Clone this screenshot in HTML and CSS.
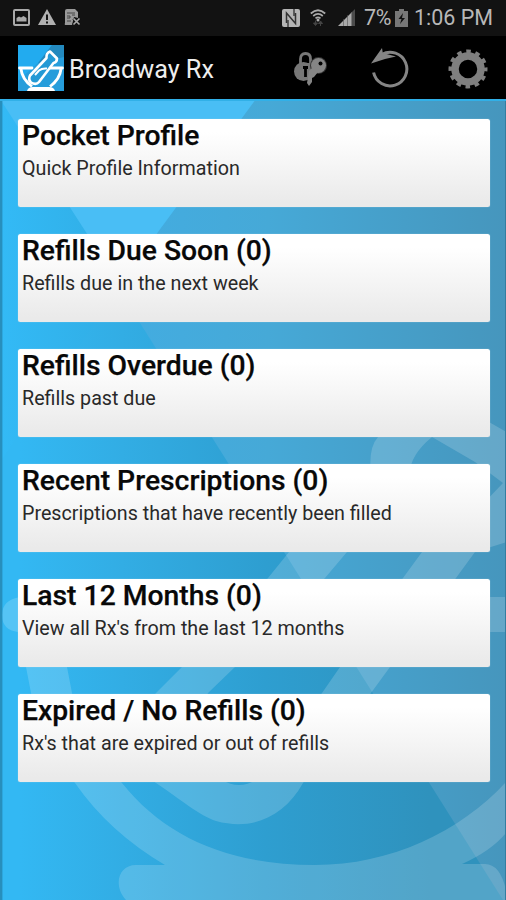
FILE: index.html
```html
<!DOCTYPE html>
<html lang="en">
<head>
<meta charset="utf-8">
<title>Broadway Rx</title>
<link rel="stylesheet" href="styles.css">
</head>
<body>
<div class="phone">
  <header class="status">
    <div class="status-left">
      <svg width="17" height="17" viewBox="0 0 17 17"><rect x="1" y="1" width="15" height="15" rx="1" fill="none" stroke="#aaa" stroke-width="2"/><path d="M3.500 12.500V9l2.500-1.500 2 1 2.500-1.500 3 2v3.500z" fill="#aaa"/></svg>
      <svg width="18" height="17" viewBox="0 0 18 17"><path d="M9 0l9 16H0z" fill="#b0b0b0"/><path d="M9 5.500v5.500M9 12.500v2" stroke="#111" stroke-width="2"/></svg>
      <svg width="17" height="17" viewBox="0 0 17 17"><path d="M1 2q0-2 2-2h8l3 3v6l-4-1-2 8H2q-2 0-1-2z" fill="#999"/><path d="M3 4h8M3 7h3v2H3M8 6h3M3 12h4" stroke="#444" fill="none"/><path d="M9.500 9.500l6 6M15.500 9.500l-6 6" stroke="#111" stroke-width="3"/><path d="M9.500 9.500l6 6M15.500 9.500l-6 6" stroke="#aaa" stroke-width="1.600"/></svg>
    </div>
    <div class="status-right">
      <svg class="nfc" width="18" height="18" viewBox="0 0 18 18"><rect width="18" height="18" rx="2" fill="#b5b5b5"/><path d="M4.500 14V4l9 10.500V4" stroke="#333" stroke-width="1.500" fill="none"/><path d="M6 18v-7M12 0v7" stroke="#222" stroke-width="1.200"/></svg>
      <svg class="wifi" width="16" height="18" viewBox="0 0 16 18"><path d="M.8 4.500Q8-2 15.200 4.500M3.200 7Q8 2.800 12.800 7M5.500 9.400Q8 7.300 10.500 9.400" stroke="#aaa" stroke-width="1.700" fill="none"/><circle cx="8" cy="11" r="1.500" fill="#aaa"/><path d="M5.500 11.500v4M3.500 14l2 2.500 2-2.500zM10.500 17v-4M8.500 14.500l2-2.500 2 2.500z" stroke="#444" fill="#444"/></svg>
      <svg class="signal" width="18" height="17" viewBox="0 0 18 17"><path d="M0 17L14 3v14z" fill="#aaa"/><path d="M14 3l3-3v17h-3z" fill="#4b4b4b"/><path d="M5.500 10v7M9.500 6v11M13.500 3v14" stroke="#555" stroke-width=".6"/></svg>
      <span class="percent">7%</span>
      <svg class="battery" width="13" height="18" viewBox="0 0 13 18"><path d="M4 0h5v2h4v16H0V2h4z" fill="#777"/><path d="M8 4L3.500 10h3L5 15l5-6H7z" fill="#111"/></svg>
      <span class="time">1:06 PM</span>
    </div>
  </header>
  <nav class="bar">
    <svg class="logo" width="46" height="46" viewBox="0 0 46 46"><rect width="46" height="46" fill="#269ddb"/><path d="M0 0h34L20 18 0 36z" fill="#22abef"/><path d="M20 18L34 0h12v12z" fill="#2389be"/><path d="M1.500 23H14M30 23h14.500" stroke="#fff" stroke-width="2.800" stroke-linecap="round"/><path d="M3 24q1 10 11 17.500M43 24q-1 10-11 17.500" stroke="#fff" stroke-width="2.800" fill="none"/><path d="M9 46q1-4 6-4h16q5 0 6 4z" fill="#fff"/><path d="M32 6.500L39 13.500Q39 17 35.500 18L21 37q-3 3.500-8 .5-3-3-1-7L28.500 13q-.5-5 3.500-6.500z" fill="#249ad5" stroke="#fff" stroke-width="2.600" stroke-linejoin="round"/><path d="M17 30l4-4.500q3-2.500 8-2" stroke="#fff" stroke-width="2" fill="none"/></svg>
    <h1 class="app">Broadway Rx</h1>
    <svg class="keys" width="33" height="36" viewBox="0 0 33 36"><path d="M6.500 14V8q0-5.500 5-5.500t5 5.500v6" fill="none" stroke="#777" stroke-width="2.800"/><circle cx="9.500" cy="20.500" r="9.500" fill="#777"/><path d="M5 12h13v15h-8z" fill="#777"/><path d="M11.500 16v10M9 16.500h5" stroke="#000" stroke-width="2.800"/><circle cx="24.500" cy="14.500" r="8.500" fill="#333"/><circle cx="24.500" cy="14.500" r="7.500" fill="#858585"/><circle cx="26.500" cy="12.500" r="2" fill="#000"/><path d="M18 17l6 4-4 5-2 1v4l-3 4-2-3 2-12z" fill="#858585"/></svg>
    <svg class="refresh" width="38" height="40" viewBox="0 0 38 40"><path d="M2.600 24.500A16.800 16.800 0 1 0 11 6.300" fill="none" stroke="#858585" stroke-width="3"/><path d="M0 15.500L11 0l.8 5L25 8.500 14 11z" fill="#858585"/></svg>
    <svg class="gear" width="40" height="40" viewBox="0 0 40 40"><circle cx="20" cy="20" r="13" fill="none" stroke="#7f7f7f" stroke-width="7.500"/><circle cx="20" cy="20" r="17.700" fill="none" stroke="#7f7f7f" stroke-width="3.600" stroke-dasharray="4.634 4.634" stroke-dashoffset="2.300"/></svg>
  </nav>
  <main class="content">
    <svg class="backdrop" width="506" height="801" viewBox="0 99 506 801">
      <defs>
        <linearGradient id="base" x1="0" x2="1" y1="0" y2="0"><stop offset="0" stop-color="#33baf6"/><stop offset=".5" stop-color="#2e9fd1"/><stop offset="1" stop-color="#2f8cb4"/></linearGradient>
        <linearGradient id="side" gradientUnits="userSpaceOnUse" x1="140" x2="506" y1="0" y2="0"><stop offset="0" stop-color="#43ace0"/><stop offset=".35" stop-color="#46a9d7"/><stop offset="1" stop-color="#4696bd"/></linearGradient>
        <linearGradient id="low" gradientUnits="userSpaceOnUse" x1="20" x2="430" y1="0" y2="0"><stop offset="0" stop-color="#33b8f3"/><stop offset=".25" stop-color="#32ade4"/><stop offset=".6" stop-color="#2e9ed0"/><stop offset="1" stop-color="#2f92bd"/></linearGradient>
      </defs>
      <rect y="99" width="506" height="801" fill="url(#base)"/>
      <path d="M120 286L506 900H0V462z" fill="url(#low)"/>
      <path d="M250 99h256v801h-3L118 288z" fill="url(#side)"/>
      <path d="M0 99h256L158 232 122 288z" fill="#49bef5"/>
      <g fill="#fff" fill-opacity=".17">
        <path fill-rule="evenodd" d="M489 422L450 400Q428 390 412 402L378 437Q368 448 371 475L350 490 289 552 268 578 182 667 156 693 125 725Q112 754 156 783C180 799 200 816 216 821C252 831 284 817 303 783L371 693 390 667 456 578 475 552 520 538V440zM432 437L475 462 503 483 480 507 422 552 403 578 340 667 322 693 256 780Q239 790 222 780L200 755Q190 725 208 693L235 667 325 578 347 552 410 475Q409 456 432 437z"/>
        <path d="M20 597h486v35H67V667L72 693Q82 739 122 783C166 838 230 865 315 865C390 865 460 832 506 782V833Q491 851 462 864H485Q500 864 506 890V900H126C113 886 118 865 136 865H165Q109 832 75 783 44 747 31 693L26 667 18 632Q2 630 2 615T20 597z"/>
      </g>
      <path d="M1.200 99v801" stroke="#278fbd" stroke-width="2.400"/>
      <path d="M505.500 99v801" stroke="#347da0"/>
      <path d="M0 100h506" stroke="#31b0e8" stroke-width="2"/>
    </svg>
    <section class="card"><h2>Pocket Profile</h2><p>Quick Profile Information</p></section>
    <section class="card"><h2>Refills Due Soon (0)</h2><p>Refills due in the next week</p></section>
    <section class="card"><h2>Refills Overdue (0)</h2><p>Refills past due</p></section>
    <section class="card"><h2>Recent Prescriptions (0)</h2><p>Prescriptions that have recently been filled</p></section>
    <section class="card"><h2>Last 12 Months (0)</h2><p>View all Rx's from the last 12 months</p></section>
    <section class="card"><h2>Expired / No Refills (0)</h2><p>Rx's that are expired or out of refills</p></section>
  </main>
</div>
</body>
</html>
```

FILE: styles.css
```css
* { box-sizing: border-box; }
body { margin: 0; background: #000; font-family: Roboto, "Liberation Sans", sans-serif; }
h1, h2, p { margin: 0; }
svg { display: block; flex: none; }
.phone { width: 506px; height: 900px; overflow: hidden; display: flex; flex-direction: column; }
.status { height: 36px; flex: none; background: #121212; color: #b8b8b8; display: flex; justify-content: space-between; padding: 0 14px 0 13px; font-size: 21.500px; line-height: 36px; }
.status-left { display: flex; align-items: center; gap: 8px; }
.status-left svg { margin-top: -2px; }
.status-right { display: flex; align-items: center; white-space: nowrap; }
.nfc, .wifi, .signal, .battery { margin-top: -1px; }
.nfc { margin-right: 1px; }
.wifi { margin-left: 9px; }
.signal { margin-left: 12px; }
.percent { margin-left: 8px; width: 28px; letter-spacing: -.3px; }
.battery { margin-left: 3px; }
.time { margin-left: 6px; width: 78px; }
.bar { height: 63px; flex: none; background: #000; display: flex; align-items: center; padding: 0 18px; }
.logo { margin-top: 1px; }
.app { margin-left: 5px; width: 225px; font-size: 25.200px; line-height: 63px; font-weight: 400; color: #eee; white-space: nowrap; padding-top: 4px; }
.keys { margin-top: 3px; }
.refresh { margin-left: 44px; }
.gear { margin-left: 39px; margin-top: 3px; }
.content { flex: 1; position: relative; padding: 19.500px 16px 0 18px; display: flex; flex-direction: column; gap: 26.500px; }
.backdrop { position: absolute; left: 0; top: 0; }
.card { position: relative; height: 88.500px; flex: none; padding: 0 4px; border-radius: 2.500px; background: linear-gradient(#fff 15%, #eaeaea 95%); color: #080808; white-space: nowrap; box-shadow: 0 0 1px #bdd9e5; }
.card h2 { font-size: 28.300px; line-height: 33px; font-weight: 500; -webkit-text-stroke: .25px #080808; }
.card p { font-size: 19.700px; line-height: 28px; margin-top: 3.500px; font-weight: 400; color: #292929; }
```
